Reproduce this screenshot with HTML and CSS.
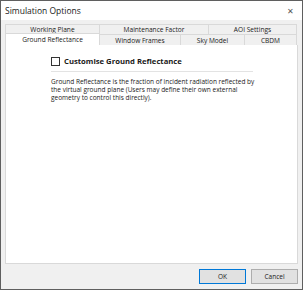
FILE: index.html
```html
<!DOCTYPE html>
<html>
<head>
    <link rel="stylesheet" href="styles.css">
</head>
<body>
    <div class="window">
        <div class="titlebar">
            <span class="title">Simulation Options</span>
            <span class="close">&#x2715;</span>
        </div>

        <div class="content">
            <div class="tabs">
                <div class="tab-row row-top">
                    <div class="tab">Working Plane</div>
                    <div class="tab">Maintenance Factor</div>
                    <div class="tab">AOI Settings</div>
                </div>
                <div class="tab-row row-bottom">
                    <div class="tab selected">Ground Reflectance</div>
                    <div class="tab">Window Frames</div>
                    <div class="tab">Sky Model</div>
                    <div class="tab">CBDM</div>
                </div>
            </div>

            <div class="panel">
                <div class="option">
                    <span class="checkbox"></span>
                    <label>Customise Ground Reflectance</label>
                </div>
                <p class="description">
                    Ground Reflectance is the fraction of incident radiation reflected by
                    the virtual ground plane (Users may define their own external
                    geometry to control this directly).
                </p>
            </div>

            <div class="buttons">
                <button class="btn default">OK</button>
                <button class="btn">Cancel</button>
            </div>
        </div>
    </div>
</body>
</html>
```

FILE: styles.css
```css
* {
    box-sizing: border-box;
}
body {
    margin: 0;
    font-family: "Open Sans", "Noto Sans", sans-serif;
    color: #1a1a1a;
}
.window {
    width: 303px;
    height: 290px;
    border: 1px solid #5f5f5f;
    display: flex;
    flex-direction: column;
    background-color: #f0f0f0;
}
.titlebar {
    height: 19px;
    background-color: #fff;
    display: flex;
    align-items: center;
    justify-content: space-between;
    padding: 0 8px 0 4px;
    font-size: 8.5px;
}
.close {
    font-size: 8px;
    font-weight: 300;
    color: #555;
}
.content {
    flex: 1;
    display: flex;
    flex-direction: column;
    padding: 4px 4px 0 4px;
}
.tab-row {
    display: grid;
    height: 10px;
    font-size: 6.6px;
}
.row-top {
    grid-template-columns: 94px 109px 89px;
}
.row-bottom {
    grid-template-columns: 94px 81px 64px 53px;
    height: 11px;
}
.tab {
    display: flex;
    align-items: center;
    justify-content: center;
    border: 1px solid #d9d9d9;
    border-right: none;
    border-bottom: none;
    background-color: #f0f0f0;
}
.tab:last-child {
    border-right: 1px solid #d9d9d9;
}
.tab.selected {
    background-color: #fff;
    margin-top: -1px;
}
.panel {
    flex: 1;
    background-color: #fff;
    border: 1px solid #d9d9d9;
    border-top: none;
    padding: 10px 44px 0 45px;
}
.option {
    display: flex;
    align-items: center;
    gap: 4px;
    height: 12px;
    padding-bottom: 4px;
    border-bottom: 1px solid #e3e3e3;
    box-sizing: content-box;
}
.checkbox {
    width: 9px;
    height: 9px;
    border: 1px solid #333;
    background-color: #fff;
}
label {
    font-size: 7.7px;
    font-weight: bold;
}
.description {
    margin: 6px -8px 0 0;
    font-size: 6.5px;
    line-height: 8px;
}
.buttons {
    display: flex;
    justify-content: flex-end;
    gap: 5px;
    padding: 5px 0 5px;
}
.btn {
    width: 47px;
    height: 15px;
    font-family: inherit;
    font-size: 6.5px;
    color: #1a1a1a;
    background-color: #e1e1e1;
    border: 1px solid #adadad;
    padding: 0;
}
.btn.default {
    border: 1px solid #0078d7;
}
```
